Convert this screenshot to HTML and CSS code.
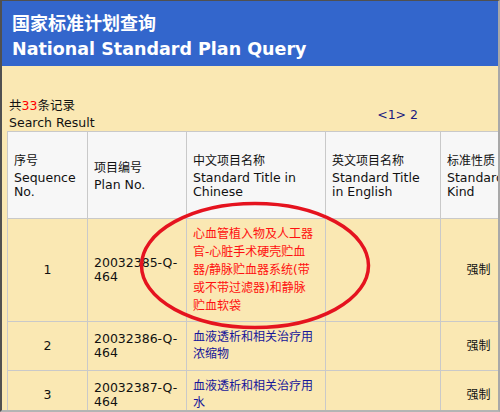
FILE: index.html
```html
<!DOCTYPE html>
<html lang="zh">
<head>
<meta charset="utf-8">
<title>国家标准计划查询</title>
<link rel="stylesheet" href="styles.css">
</head>
<body>
<div class="frame">
  <div class="header">
    <div class="title-cn">国家标准计划查询</div>
    <div class="title-en">National Standard Plan Query</div>
  </div>
  <div class="info">
    <div class="count">
      <div>共<span class="num">33</span>条记录</div>
      <div>Search Result</div>
    </div>
    <div class="pager">&lt;1&gt; <span class="page-link">2</span></div>
  </div>
  <table class="results">
    <thead>
      <tr>
        <th class="w-seq"><div class="cn">序号</div><div class="en">Sequence No.</div></th>
        <th class="w-no"><div class="cn">项目编号</div><div class="en">Plan No.</div></th>
        <th class="w-cn"><div class="cn">中文项目名称</div><div class="en">Standard Title in Chinese</div></th>
        <th class="w-en"><div class="cn">英文项目名称</div><div class="en">Standard Title in English</div></th>
        <th class="w-kind"><div class="cn">标准性质</div><div class="en">Standard Kind</div></th>
      </tr>
    </thead>
    <tbody>
      <tr>
        <td class="seq">1</td>
        <td class="code">20032385-Q-464</td>
        <td class="title hot">心血管植入物及人工器官-心脏手术硬壳贮血器/静脉贮血器系统(带或不带过滤器)和静脉贮血软袋</td>
        <td class="title-en"></td>
        <td class="kind">强制</td>
      </tr>
      <tr>
        <td class="seq">2</td>
        <td class="code">20032386-Q-464</td>
        <td class="title">血液透析和相关治疗用浓缩物</td>
        <td class="title-en"></td>
        <td class="kind">强制</td>
      </tr>
      <tr>
        <td class="seq">3</td>
        <td class="code">20032387-Q-464</td>
        <td class="title">血液透析和相关治疗用水</td>
        <td class="title-en"></td>
        <td class="kind">强制</td>
      </tr>
    </tbody>
  </table>
  <svg class="mark" width="500" height="412" viewBox="0 0 500 412" aria-hidden="true">
    <ellipse cx="253" cy="264.5" rx="113.5" ry="62" fill="none" stroke="#e5131f" stroke-width="3.5"/>
  </svg>
</div>
</body>
</html>
```
FILE: styles.css
```css
html, body {
  margin: 0;
  padding: 0;
}

body {
  font-family: "DejaVu Sans", Verdana, "Noto Sans CJK SC", sans-serif;
  color: #111;
}

.frame {
  position: relative;
  width: 500px;
  height: 412px;
  box-sizing: border-box;
  border-top: 1px solid #505050;
  border-left: 2px solid #505050;
  border-right: 2px solid #a8a8a8;
  border-bottom: 2px solid #b4b4b4;
  background: #fae8b3;
  overflow: hidden;
}

.header {
  background: #3366cc;
  color: #fff;
  padding: 8px 10px 3px 10px;
}

.title-cn {
  font-family: "Noto Sans CJK SC", sans-serif;
  font-weight: 700;
  font-size: 18px;
  line-height: 26px;
}

.title-en {
  font-weight: 700;
  font-size: 17.5px;
  line-height: 28px;
  white-space: nowrap;
}

.info {
  display: flex;
  align-items: center;
  padding: 31px 80px 0 7px;
  font-size: 12.5px;
  line-height: 17px;
}

.count {
  flex: 1;
}

.num {
  color: #ff0000;
}

.pager {
  color: #1a1a80;
}

.results {
  border-collapse: separate;
  border-spacing: 0;
  table-layout: fixed;
  width: 510px;
  margin-left: 5px;
  border-left: 1px solid #c9c9c9;
  border-top: 1px solid #c9c9c9;
  font-size: 12.5px;
}

.results th,
.results td {
  box-sizing: border-box;
  border-right: 1px solid #c9c9c9;
  border-bottom: 1px solid #c9c9c9;
  padding: 7px 6px;
  vertical-align: middle;
  text-align: left;
  font-weight: normal;
}

.results th {
  background: #f7f7f7;
  padding: 19px 6px;
}

.w-seq { width: 80px; }
.w-no { width: 99px; }
.w-cn { width: 139px; }
.w-en { width: 115px; }
.w-kind { width: 76px; }

.results .cn {
  font-size: 12px;
  line-height: 20px;
}

.results .en {
  line-height: 14px;
}

.results td.seq {
  text-align: center;
  line-height: 14px;
}

.results td.code {
  line-height: 14px;
}

.results td.title {
  font-size: 12px;
  line-height: 17px;
  padding-right: 10px;
  color: #16169a;
}

.results td.hot {
  color: #ff1010;
  line-height: 18px;
  padding-top: 6px;
  padding-bottom: 6px;
}

.results td.kind {
  text-align: center;
  font-size: 12px;
  line-height: 17px;
}

.mark {
  position: absolute;
  left: 0;
  top: 0;
  pointer-events: none;
}
```
